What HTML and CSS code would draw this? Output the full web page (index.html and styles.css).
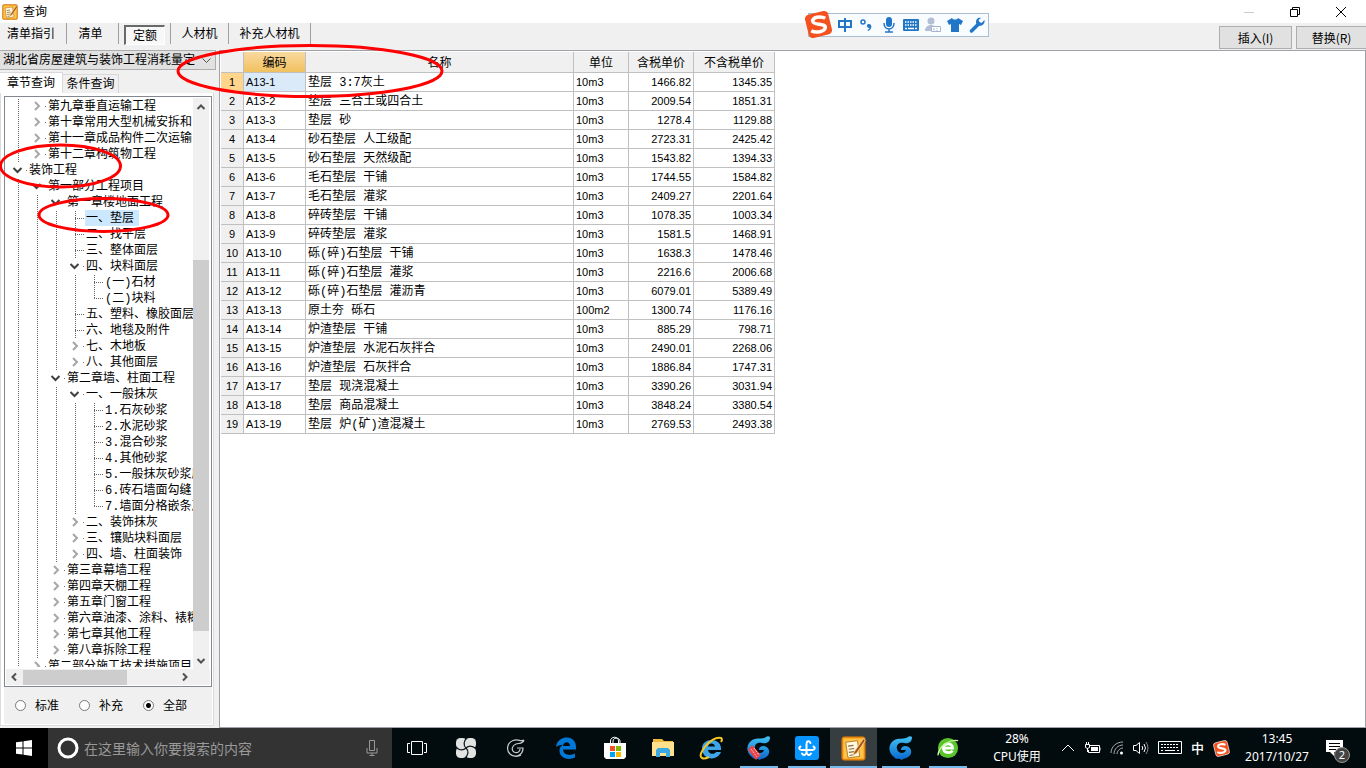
FILE: index.html
```html
<!DOCTYPE html>
<html lang="zh-CN">
<head>
<meta charset="utf-8">
<title>查询</title>
<link rel="stylesheet" href="styles.css">
</head>
<body>
<div class="desktop">
  <header class="titlebar">
    <svg class="app-icon" viewBox="0 0 32 32"><use href="#note-icon"/></svg>
    <h1 class="title">查询</h1>
    <div class="window-buttons">
      <button class="win-btn" aria-label="最小化"><svg viewBox="0 0 12 12"><path d="M1 6.500h10" stroke="#ccc"/></svg></button>
      <button class="win-btn" aria-label="还原"><svg viewBox="0 0 12 12"><path d="M1.500 3.500h7v7h-7zM3.500 3.500v-2h7v7h-2" stroke="#000"/></svg></button>
      <button class="win-btn" aria-label="关闭"><svg viewBox="0 0 12 12"><path d="M1 1l10 10M11 1L1 11" stroke="#000"/></svg></button>
    </div>
  </header>

  <nav class="toolbar">
    <button class="tool tool-wide">清单指引</button>
    <button class="tool">清单</button>
    <button class="tool"><span class="pressed">定额</span></button>
    <button class="tool tool-mid">人材机</button>
    <button class="tool tool-xwide">补充人材机</button>
    <div class="actions">
      <button class="action">插入(I)</button>
      <button class="action">替换(R)</button>
    </div>
  </nav>

  <main class="content">
    <aside class="sidebar">
      <div class="combo">
        <select class="combo-select" aria-label="定额库"><option>湖北省房屋建筑与装饰工程消耗量定</option></select>
        <svg class="combo-arrow" viewBox="0 0 9 6"><path d="M.5 .5l4 4 4-4" stroke="#555"/></svg>
      </div>
      <div class="tabs" role="tablist">
        <button class="tab tab-active" role="tab" aria-selected="true">章节查询</button>
        <button class="tab" role="tab" aria-selected="false">条件查询</button>
      </div>
      <section class="tab-panel">
        <div class="tree-box">
          <div class="tree-main">
            <ul class="tree" role="tree">
              <li class="row l1 closed"><span class="label">第九章垂直运输工程</span></li>
              <li class="row l1 closed"><span class="label">第十章常用大型机械安拆和</span></li>
              <li class="row l1 closed"><span class="label">第十一章成品构件二次运输</span></li>
              <li class="row l1 closed"><span class="label">第十二章构筑物工程</span></li>
              <li class="row l0 open"><span class="label">装饰工程</span></li>
              <li class="row l1 open"><span class="label">第一部分工程项目</span></li>
              <li class="row l2 open"><span class="label">第一章楼地面工程</span></li>
              <li class="row l3 leaf"><span class="label selected">一、垫层</span></li>
              <li class="row l3 leaf"><span class="label">二、找平层</span></li>
              <li class="row l3 leaf"><span class="label">三、整体面层</span></li>
              <li class="row l3 open"><span class="label">四、块料面层</span></li>
              <li class="row l4 leaf"><span class="label">(一)石材</span></li>
              <li class="row l4 leaf last"><span class="label">(二)块料</span></li>
              <li class="row l3 leaf"><span class="label">五、塑料、橡胶面层</span></li>
              <li class="row l3 leaf"><span class="label">六、地毯及附件</span></li>
              <li class="row l3 closed"><span class="label">七、木地板</span></li>
              <li class="row l3 closed"><span class="label">八、其他面层</span></li>
              <li class="row l2 open"><span class="label">第二章墙、柱面工程</span></li>
              <li class="row l3 open"><span class="label">一、一般抹灰</span></li>
              <li class="row l4 leaf"><span class="label">1.石灰砂浆</span></li>
              <li class="row l4 leaf"><span class="label">2.水泥砂浆</span></li>
              <li class="row l4 leaf"><span class="label">3.混合砂浆</span></li>
              <li class="row l4 leaf"><span class="label">4.其他砂浆</span></li>
              <li class="row l4 leaf"><span class="label">5.一般抹灰砂浆厚</span></li>
              <li class="row l4 leaf"><span class="label">6.砖石墙面勾缝</span></li>
              <li class="row l4 leaf last"><span class="label">7.墙面分格嵌条及</span></li>
              <li class="row l3 closed"><span class="label">二、装饰抹灰</span></li>
              <li class="row l3 closed"><span class="label">三、镶贴块料面层</span></li>
              <li class="row l3 closed"><span class="label">四、墙、柱面装饰</span></li>
              <li class="row l2 closed"><span class="label">第三章幕墙工程</span></li>
              <li class="row l2 closed"><span class="label">第四章天棚工程</span></li>
              <li class="row l2 closed"><span class="label">第五章门窗工程</span></li>
              <li class="row l2 closed"><span class="label">第六章油漆、涂料、裱糊</span></li>
              <li class="row l2 closed"><span class="label">第七章其他工程</span></li>
              <li class="row l2 closed"><span class="label">第八章拆除工程</span></li>
              <li class="row l1 closed"><span class="label">第二部分施工技术措施项目</span></li>
            </ul>
            <div class="vscroll">
              <svg class="arrow" viewBox="0 0 10 10"><path d="M1.500 7L5 3.500 8.500 7"/></svg>
              <div class="vtrack"><div class="vthumb"></div></div>
              <svg class="arrow" viewBox="0 0 10 10"><path d="M1.500 3L5 6.500 8.500 3"/></svg>
            </div>
          </div>
          <div class="hscroll">
            <svg class="arrow" viewBox="0 0 10 10"><path d="M7 1.500L3.500 5 7 8.500"/></svg>
            <div class="htrack"><div class="hthumb"></div></div>
            <svg class="arrow" viewBox="0 0 10 10"><path d="M3 1.500L6.500 5 3 8.500"/></svg>
          </div>
        </div>
        <div class="filters">
          <label class="filter"><input type="radio" name="scope"><span class="filter-text">标准</span></label>
          <label class="filter"><input type="radio" name="scope"><span class="filter-text">补充</span></label>
          <label class="filter"><input type="radio" name="scope" checked><span class="filter-text">全部</span></label>
        </div>
      </section>
    </aside>

    <section class="grid-panel">
      <table class="grid">
        <colgroup><col class="c-no"><col class="c-code"><col class="c-name"><col class="c-unit"><col class="c-price"><col class="c-net"></colgroup>
        <thead><tr><th></th><th class="hot">编码</th><th>名称</th><th>单位</th><th>含税单价</th><th>不含税单价</th></tr></thead>
        <tbody>
          <tr class="current"><th>1</th><td>A13-1</td><td>垫层 3:7灰土</td><td>10m3</td><td>1466.82</td><td>1345.35</td></tr>
          <tr><th>2</th><td>A13-2</td><td>垫层 三合土或四合土</td><td>10m3</td><td>2009.54</td><td>1851.31</td></tr>
          <tr><th>3</th><td>A13-3</td><td>垫层 砂</td><td>10m3</td><td>1278.4</td><td>1129.88</td></tr>
          <tr><th>4</th><td>A13-4</td><td>砂石垫层 人工级配</td><td>10m3</td><td>2723.31</td><td>2425.42</td></tr>
          <tr><th>5</th><td>A13-5</td><td>砂石垫层 天然级配</td><td>10m3</td><td>1543.82</td><td>1394.33</td></tr>
          <tr><th>6</th><td>A13-6</td><td>毛石垫层 干铺</td><td>10m3</td><td>1744.55</td><td>1584.82</td></tr>
          <tr><th>7</th><td>A13-7</td><td>毛石垫层 灌浆</td><td>10m3</td><td>2409.27</td><td>2201.64</td></tr>
          <tr><th>8</th><td>A13-8</td><td>碎砖垫层 干铺</td><td>10m3</td><td>1078.35</td><td>1003.34</td></tr>
          <tr><th>9</th><td>A13-9</td><td>碎砖垫层 灌浆</td><td>10m3</td><td>1581.5</td><td>1468.91</td></tr>
          <tr><th>10</th><td>A13-10</td><td>砾(碎)石垫层 干铺</td><td>10m3</td><td>1638.3</td><td>1478.46</td></tr>
          <tr><th>11</th><td>A13-11</td><td>砾(碎)石垫层 灌浆</td><td>10m3</td><td>2216.6</td><td>2006.68</td></tr>
          <tr><th>12</th><td>A13-12</td><td>砾(碎)石垫层 灌沥青</td><td>10m3</td><td>6079.01</td><td>5389.49</td></tr>
          <tr><th>13</th><td>A13-13</td><td>原土夯 砾石</td><td>100m2</td><td>1300.74</td><td>1176.16</td></tr>
          <tr><th>14</th><td>A13-14</td><td>炉渣垫层 干铺</td><td>10m3</td><td>885.29</td><td>798.71</td></tr>
          <tr><th>15</th><td>A13-15</td><td>炉渣垫层 水泥石灰拌合</td><td>10m3</td><td>2490.01</td><td>2268.06</td></tr>
          <tr><th>16</th><td>A13-16</td><td>炉渣垫层 石灰拌合</td><td>10m3</td><td>1886.84</td><td>1747.31</td></tr>
          <tr><th>17</th><td>A13-17</td><td>垫层 现浇混凝土</td><td>10m3</td><td>3390.26</td><td>3031.94</td></tr>
          <tr><th>18</th><td>A13-18</td><td>垫层 商品混凝土</td><td>10m3</td><td>3848.24</td><td>3380.54</td></tr>
          <tr><th>19</th><td>A13-19</td><td>垫层 炉(矿)渣混凝土</td><td>10m3</td><td>2769.53</td><td>2493.38</td></tr>
        </tbody>
      </table>
    </section>
  </main>

  <footer class="taskbar">
    <button class="start" aria-label="开始"><svg viewBox="0 0 16 16" width="16" height="16"><path fill="#fff" d="M0 2.300L6.500 1.400v6.100H0zM7.500 1.200L16 0v7.500H7.500zM0 8.500h6.500v6.100L0 13.700zM7.500 8.500H16V16l-8.500-1.200z"/></svg></button>
    <label class="search">
      <svg viewBox="0 0 22 22" width="22" height="22"><circle cx="11" cy="11" r="9" fill="none" stroke="#fff" stroke-width="3"/></svg>
      <input class="search-input" type="text" placeholder="在这里输入你要搜索的内容">
      <svg viewBox="0 0 12 18" width="12" height="18" fill="none" stroke="#999"><path d="M3.500 1.500h5v10h-5zM1 9v5h10V9M6 14v3M3.500 16.500h5"/></svg>
    </label>
    <div class="apps">
      <button class="app" aria-label="任务视图"><svg viewBox="0 0 20 16" width="20" height="16" fill="none" stroke="#fff"><path d="M4.500 1.500h11v13h-11zM3 3.500H.5v9H3M17 3.500h2.500v9H17"/></svg></button>
      <button class="app app-wide" aria-label="四叶草"><svg viewBox="0 0 22 22" width="22" height="22"><g fill="#e2e4e4"><rect x="1" y="1" width="11" height="11" rx="4.500"/><rect x="10" y="1" width="11" height="11" rx="4.500"/><rect x="1" y="10" width="11" height="11" rx="4.500"/><rect x="10" y="10" width="11" height="11" rx="4.500"/><circle cx="11" cy="11" r="3"/></g><path d="M11 11C8 8 9 4 12 .5M11 11c3-3 7-2 10.500 1M11 11c3 3 2 7-1 10.500M11 11c-3 3-7 2-10.500-1" fill="none" stroke="#111b1f" stroke-width="1.200"/></svg></button>
      <button class="app app-wide" aria-label="浏览器"><svg viewBox="0 0 20 20" width="20" height="20" fill="none" stroke="#c8cdd0" stroke-width="1.200"><path d="M18 2C15 4 12 .5 7 2.500 1 5 0 12 4 16c5 4.500 13 1.500 13-6h-6M18 2c-1 4-5 3-8 4-4 1.500-5 6-2 8 3 1.500 6 0 6-3M3 15c3 4 9 4 12 2"/></svg></button>
      <button class="app app-wide" aria-label="Edge"><svg viewBox="0 0 22 22" width="22" height="22"><path fill="#0078d7" d="M1 10C2 3 7 .5 12 .5c6 0 9 4.500 9 9.500v2.500H8c.5 6 8 6.500 12 4v4c-4 2-10 2-13-1-4-4-3-10 1.500-12C4.500 8 2.500 9 1 10zm7-1h7c0-5-6.500-5-7 0z"/></svg></button>
      <button class="app" aria-label="应用商店"><svg viewBox="0 0 24 24" width="24" height="24"><path d="M7.500 8V5c0-5 8-5 8 0v3M10 7V5c0-4 7-3.500 7 0v2" fill="none" stroke="#fff"/><path fill="#fff" d="M1 7h22v14l-2 2H3l-2-2z"/><path fill="#f25022" d="M7 10h5v5H7z"/><path fill="#7fba00" d="M13 10h5v5h-5z"/><path fill="#00a4ef" d="M7 16h5v5H7z"/><path fill="#ffb900" d="M13 16h5v5h-5z"/></svg></button>
      <button class="app" aria-label="文件资源管理器"><svg viewBox="0 0 22 20" width="22" height="20"><path fill="#efb93a" d="M1 1h9l2 2h9v5H1z"/><path fill="#ffe08c" d="M0 4h22v14H0z"/><path fill="#38a9e4" d="M4 19v-7l2-2h10l2 2v7h-4v-4H8v4z"/></svg></button>
      <button class="app" aria-label="Internet Explorer"><svg viewBox="0 0 24 24" width="24" height="24"><path fill="#3ea6e8" d="M3 12.500C3 1 22 1 22 12.500V14H9c1 5 7 4.500 8 2h5c-4 10-19 8-19-3.500zM9 10.500h7c-.5-4-6.500-4-7 0z"/><path d="M3 22C-3 19 12 0 22 2c2 1 0 4 0 4M3 22c2 1 5 0 7-1" fill="none" stroke="#f5c722" stroke-width="2"/></svg></button>
      <button class="app running" aria-label="广联达"><svg viewBox="0 0 24 24" width="24" height="24"><use href="#swirl"/><path d="M5 9l9 10-5 5L1 14z" fill="#e6454b"/><path d="M4 13l6 8M7 12l5 7" stroke="#ffb8b5" stroke-dasharray="2 1"/></svg></button>
      <button class="app app-slim running" aria-label="同步"><svg viewBox="0 0 24 24" width="24" height="24"><rect width="24" height="24" rx="3" fill="#0796ff"/><path d="M15.500 7C14 4 11.500 5 11.500 8v8c0 3-3 4-4.500 1.500M5.500 10.500c-2 1-1.500 3.500 1 3.500h11c2.500 0 3-2.500 1-3.500M11.500 16c0 3 3 4 4.500 1.500" fill="none" stroke="#fff" stroke-width="2" stroke-linecap="round"/></svg></button>
      <button class="app app-slim running active" aria-label="计价软件"><svg viewBox="0 0 32 32" width="25" height="25"><use href="#note-icon"/></svg></button>
      <button class="app app-slim running" aria-label="云服务"><svg viewBox="0 0 24 24" width="24" height="24"><use href="#swirl"/></svg></button>
      <button class="app app-slim running" aria-label="安全浏览器"><svg viewBox="0 0 24 24" width="22" height="22"><circle cx="12" cy="12" r="11" fill="#5ac52b"/><path d="M8 12h9c0-6-10-6-10 0s8 6 10 3" fill="none" stroke="#fff" stroke-width="3"/><path d="M1 20C2 10 14 2 23 4" fill="none" stroke="#c8f4a5" stroke-width="1.500"/></svg></button>
    </div>
    <div class="tray">
      <div class="readout cpu"><span>28%</span><span>CPU使用</span></div>
      <svg viewBox="0 0 14 8" width="14" height="8"><path d="M1 7l6-6 6 6"/></svg>
      <svg viewBox="0 0 17 12" width="17" height="12"><path d="M5.500 3.500h10v7h-11V8M16 5.500v3M1.500 2.500h4v3l-2 1-2-1zM2.500 0v2M4.500 0v2M3.500 6v4"/><path d="M7 5h7v4H7z" fill="#fff" stroke="none"/></svg>
      <svg viewBox="0 0 14 14" width="14" height="14"><path d="M1 12C1 6 6 1 13 1M4 13c0-5 4-9 9-9M7 13c0-3 3-6 6-6" stroke="#aaa"/><circle cx="11.500" cy="12" r="1.500" fill="#fff" stroke="none"/></svg>
      <svg viewBox="0 0 16 14" width="16" height="14"><path d="M.5 4.500H3L6.500 1.500v11L3 9.500H.5zM9 5q1.500 2 0 4M11 3q3 4 0 8"/><path d="M13 1q4 6 0 12" stroke="#888"/></svg>
      <svg viewBox="0 0 24 14" width="24" height="14"><path d="M.5 .5h23v12H.5z"/><path d="M3 3.500h18M3 6.500h18" stroke-dasharray="2 1"/><path d="M3 9.500h2M7 9.500h10M19 9.500h2"/></svg>
      <span class="ime">中</span>
      <svg viewBox="0 0 28 28" width="17" height="17"><use href="#sogou"/></svg>
      <div class="readout clock"><span>13:45</span><span>2017/10/27</span></div>
      <button class="notify" aria-label="2 条新通知"><svg viewBox="0 0 17 16" width="17" height="16"><path d="M0 0h17v12H8v4l-4-4H0z" fill="#fff" stroke="none"/><path d="M3 3.500h11M3 6.500h11M3 9.500h7" stroke="#000"/></svg><span class="count">2</span></button>
    </div>
  </footer>

  <div class="ime-bar">
    <svg class="ime-logo" viewBox="0 0 28 28"><use href="#sogou"/></svg>
    <div class="ime-tools">
      <svg viewBox="0 0 16 16"><path d="M2 4h12v6H2zM8 1v14" fill="none" stroke="#2176c7" stroke-width="2"/></svg>
      <svg viewBox="0 0 16 16"><circle cx="4" cy="5" r="2" fill="none" stroke="#2176c7" stroke-width="1.500"/><path d="M9 7c4-1 5 5 0 7l-.5-1c2-1 2-2 2-2-3 0-3-3-1.500-4z" fill="#2176c7"/></svg>
      <svg viewBox="0 0 16 16"><rect x="5" y="0" width="6" height="10" rx="3" fill="#2176c7"/><path d="M3 6c0 8 10 8 10 0M8 12v3M4 15h8" fill="none" stroke="#2176c7" stroke-width="1.500"/></svg>
      <svg viewBox="0 0 16 16"><rect y="2" width="16" height="12" rx="1" fill="#2176c7"/><path d="M2 5h12M2 8h12" stroke="#fff" stroke-width="1.500" stroke-dasharray="1.500 1"/><path d="M2 11.500h2M5 11.500h6M12 11.500h2" stroke="#fff" stroke-width="1.500"/></svg>
      <svg viewBox="0 0 16 16"><circle cx="6" cy="4" r="3.500" fill="#b3bfd4"/><path d="M0 14c0-8 12-8 12 0z" fill="#b3bfd4"/><path d="M6.500 9.500h9v5h-9z" fill="#fff" stroke="#a5b3cc"/><path d="M9 11v2.500M12 11v1M12 13v1" stroke="#a5b3cc"/></svg>
      <svg viewBox="0 0 16 16"><path d="M5 1c1 2 5 2 6 0l5 3-2 4-2-1v8H4V7L2 8 0 4z" fill="#2176c7"/></svg>
      <svg viewBox="0 0 16 16"><path d="M2.500 14L9 7.500" stroke="#2176c7" stroke-width="3.500" stroke-linecap="round"/><path d="M12 1C8 0 6 4 7.500 7c3 4 9 1 8-4l-3 3-2-1-1-2z" fill="#2176c7"/></svg>
    </div>
  </div>

  <svg class="marks" width="460" height="240" viewBox="0 0 460 240" fill="none" stroke="#f00" stroke-width="3">
    <ellipse cx="310" cy="71" rx="132" ry="25.500"/>
    <ellipse cx="60.500" cy="166" rx="60" ry="21"/>
    <ellipse cx="103.500" cy="215" rx="64.500" ry="16.500"/>
  </svg>
</div>

<svg class="defs" aria-hidden="true">
  <defs>
    <linearGradient id="blue-fade" x1="0" y1="0" x2="0" y2="1"><stop offset="0" stop-color="#42c3f3"/><stop offset="1" stop-color="#0868cf"/></linearGradient>
    <symbol id="note-icon" viewBox="0 0 32 32">
      <rect x="1" y="1" width="30" height="30" rx="3" fill="#f28c0c" stroke="#b86c10"/>
      <rect x="3" y="3" width="26" height="26" fill="#ffc345"/>
      <path d="M6 8l15-2 3 20-15 2z" fill="#fff8dc" stroke="#a5651a"/>
      <path d="M9 13l7-1M10 17l7-1M10 21l7-1M11 25l5-1" stroke="#8a6a45" stroke-width="1.500"/>
      <path d="M29 3L17 20l-2 5 5-3L31 6z" fill="#a9521a" stroke="#fbe0a0"/>
    </symbol>
    <symbol id="swirl" viewBox="0 0 24 24">
      <path fill="url(#blue-fade)" d="M23 1c0 5-3 7-8 6-5-1-8 2-7 6 1 5 8 5 9 1h-5c0-3 2-4 5-4 6 1 7 8 2 11-2 2-5 1-6 3-3-2-6 0-8-3C-1 17-1 9 4 5c5-4 12-1 15-4 1-1 3-1 4 0z"/>
    </symbol>
    <symbol id="sogou" viewBox="0 0 28 28">
      <rect x="2.500" y="2.500" width="23" height="23" rx="4" fill="#f4511e" transform="rotate(-14 14 14)"/>
      <path d="M20.500 8C16 5.500 7.500 7 8.500 11c.5 4 12.500 1.500 12 6-.5 4-9 5.500-13.500 3" fill="none" stroke="#fff" stroke-width="3.500"/>
    </symbol>
  </defs>
</svg>
</body>
</html>
```
FILE: styles.css
```css
* { box-sizing: border-box; }

body {
  margin: 0;
  background: #f0f0f0;
  color: #000;
  font: 12px/16px "Liberation Mono", "Noto Sans CJK SC", monospace;
}

button, input, select { font: inherit; color: inherit; }
button { padding: 0; border: 0; background: none; }
svg { display: block; flex: none; }
.defs { position: absolute; width: 0; height: 0; }

.desktop {
  position: relative;
  display: flex;
  flex-direction: column;
  height: 100vh;
  overflow: hidden;
}

/* title bar */
.titlebar { display: flex; align-items: center; flex: none; height: 23px; padding-left: 2px; background: #fff; }
.app-icon { width: 16px; height: 16px; }
.title { margin: 0 0 0 5px; padding-top: 2px; font-size: 12px; font-weight: 400; }
.window-buttons { display: flex; margin-left: auto; padding-right: 2px; }
.win-btn { display: flex; align-items: center; justify-content: center; width: 46px; height: 20px; }
.win-btn svg { width: 12px; height: 12px; fill: none; }

/* toolbar */
.toolbar { display: flex; flex: none; height: 27px; }
.tool { width: 52px; height: 21px; border-right: 1px solid #a0a0a0; padding: 2px 4px 0 0; }
.tool-wide { width: 67px; }
.tool-mid { width: 58px; padding-right: 0; }
.tool-xwide { width: 82px; padding-right: 0; }
.pressed {
  display: block;
  width: 41px;
  height: 20px;
  margin-left: 5px;
  padding-top: 2px;
  border: 1px solid #fff;
  border-top: 2px solid #696969;
  border-left: 2px solid #696969;
  background: #f8f8f8;
}
.actions { display: flex; gap: 4px; margin: 3px 0 0 auto; }
.action { width: 73px; height: 23px; border: 1px solid #adadad; background: #e1e1e1; font-family: "Noto Sans CJK SC", sans-serif; }
.action:last-child { width: 70px; border-right: 0; }

/* sidebar */
.content { display: flex; flex: 1; min-height: 0; }
.sidebar { display: flex; flex-direction: column; flex: none; width: 219px; }
.combo { position: relative; width: 216px; height: 20px; }
.combo-select {
  width: 100%;
  height: 20px;
  padding: 2px 20px 0 3px;
  border: 1px solid #adadad;
  border-left: 0;
  background: #e1e1e1;
  appearance: none;
}
.combo-arrow { position: absolute; right: 5px; top: 8px; width: 9px; height: 6px; fill: none; }
.tabs { display: flex; align-items: flex-end; height: 23px; }
.tab { width: 56px; height: 19px; padding-top: 2px; border: 1px solid #d9d9d9; border-left: 0; border-bottom: 0; }
.tab-active { width: 63px; height: 21px; background: #fff; }

.tab-panel {
  display: flex;
  flex-direction: column;
  flex: 1;
  min-height: 0;
  width: 214px;
  margin-bottom: 2px;
  padding: 3px 1px 1px 3px;
  border: 1px solid #dcdcdc;
  border-top: 0;
  background: #fff;
}
.tree-box {
  display: flex;
  flex-direction: column;
  flex: 1;
  min-height: 0;
  padding: 1px;
  border: 1px solid #828790;
  background: #fff;
}
.tree-main { display: flex; flex: 1; min-height: 0; }
.tree { flex: 1; min-width: 0; margin: 0 0 2px; padding: 0; overflow: hidden; list-style: none; }

.row { display: flex; height: 16px; padding-left: 6px; white-space: nowrap; --depth: 0; }
.l1 { --depth: 1; }
.l2 { --depth: 2; }
.l3 { --depth: 3; }
.l4 { --depth: 4; }

/* dotted guides, one per ancestor level */
.row::before {
  content: "";
  flex: none;
  width: calc(var(--depth) * 19px);
  background:
    repeating-linear-gradient(#fff 0 1px, transparent 1px 2px),
    linear-gradient(90deg, #666 1px, transparent 1px) 6px 0 / 19px 100%;
}
.label { order: 2; padding: 1px 1px 0; }
.selected { padding-right: 5px; background: #cce8ff; }
.row::after { content: ""; flex: none; order: 1; width: 16px; background-repeat: no-repeat; }
.open::after {
  background-image: url("data:image/svg+xml,%3Csvg xmlns='http://www.w3.org/2000/svg' width='16' height='16' fill='none'%3E%3Cpath d='M1.500 6l4 4 4-4' stroke='%23404040' stroke-width='2'/%3E%3Cpath d='M14 8.500h1' stroke='%23777'/%3E%3C/svg%3E");
}
.closed::after {
  background-image: url("data:image/svg+xml,%3Csvg xmlns='http://www.w3.org/2000/svg' width='16' height='16' fill='none'%3E%3Cpath d='M4 4l4 4-4 4' stroke='%23a6a6a6' stroke-width='2'/%3E%3Cpath d='M14 8.500h1' stroke='%23777'/%3E%3C/svg%3E");
}
.leaf::after {
  background-image: url("data:image/svg+xml,%3Csvg xmlns='http://www.w3.org/2000/svg' width='16' height='16' fill='none' stroke='%23666' stroke-dasharray='1'%3E%3Cpath d='M6.500 1v15M6 8.500h10'/%3E%3C/svg%3E");
}
.last::after {
  background-image: url("data:image/svg+xml,%3Csvg xmlns='http://www.w3.org/2000/svg' width='16' height='16' fill='none' stroke='%23666' stroke-dasharray='1'%3E%3Cpath d='M6.500 1v8M6 8.500h10'/%3E%3C/svg%3E");
}

.vscroll { display: flex; flex-direction: column; align-items: center; width: 16px; margin-right: 1px; padding: 4px 0 3px; background: #f0f0f0; }
.arrow { width: 10px; height: 10px; fill: none; stroke: #505050; stroke-width: 2; }
.vtrack { display: flex; flex-direction: column; justify-content: flex-end; flex: 1; align-self: stretch; padding: 4px 0 25px; }
.vthumb { height: 72%; background: #cdcdcd; }
.hscroll { display: flex; align-items: center; flex: none; height: 16px; padding: 0 20px 0 3px; background: #f0f0f0; }
.htrack { flex: 1; padding: 0 4px; }
.hthumb { width: 68%; height: 15px; background: #cdcdcd; }

.filters { display: flex; flex: none; align-items: center; height: 37px; padding-left: 11px; background: #f0f0f0; }
.filter { display: flex; align-items: center; gap: 9px; width: 64px; }
.filter-text { padding-top: 2px; }
.filter input {
  width: 11px;
  height: 11px;
  margin: 0;
  border: 1px solid #777;
  border-radius: 50%;
  background: #fff;
  appearance: none;
}
.filter input:checked { background: radial-gradient(#000 0 2px, #fff 3px); }

/* data grid */
.grid-panel { flex: 1; min-width: 0; border: 1px solid #a0a0a8; padding: 1px; background: #fff; }
.grid { width: 554px; border-collapse: separate; border-spacing: 0; table-layout: fixed; }
.c-no { width: 23px; }
.c-code { width: 62px; }
.c-name { width: 268px; }
.c-unit { width: 55px; }
.c-price { width: 65px; }
.c-net { width: 81px; }
.grid th, .grid td { height: 19px; padding: 0 2px; border-right: 1px solid #c0c0c0; border-bottom: 1px solid #c0c0c0; line-height: 16px; white-space: nowrap; overflow: hidden; }
.grid td:nth-child(3) { padding: 2px 2px 0; }
.grid th { padding: 0; background: #f0f0f0; font-weight: 400; text-align: center; }
.grid thead th { height: 21px; padding-top: 3px; }
.grid .hot { background: linear-gradient(#f9d99f, #f1c15f); }
.grid tbody th, .grid td:not(:nth-child(3)) { font-family: "Liberation Sans", "Noto Sans CJK SC", sans-serif; font-size: 11px; }
.grid td:nth-child(n + 5) { text-align: right; }
.grid .current th { background: #ffd58d; }
.current td:nth-child(2) { background: #dbeaf9; }

/* taskbar */
.taskbar { display: flex; flex: none; height: 40px; background: #020b0e; color: #fff; font-family: "Noto Sans", "Noto Sans CJK SC", sans-serif; }
.start { display: flex; align-items: center; justify-content: center; width: 48px; background: #000; }
.search { display: flex; align-items: center; width: 344px; padding: 0 14px 0 9px; background: #333; }
.search-input { flex: 1; min-width: 0; margin: 0 5px; padding: 0; border: 0; background: none; font: 14px/20px "Noto Sans CJK SC", sans-serif; }
.search-input::placeholder { color: #999; opacity: 1; }
.apps { display: flex; padding-left: 1px; }
.app { display: flex; align-items: center; justify-content: center; width: 48px; padding-top: 2px; border-bottom: 2px solid transparent; }
.app-wide { width: 50px; }
.app-slim { width: 47px; }
.running { background: linear-gradient(#76b9ed, #76b9ed) center bottom / 38px 2px no-repeat border-box; }
.active { background: linear-gradient(#76b9ed, #76b9ed) center bottom / 100% 2px no-repeat border-box, #373e41; }
.tray { display: flex; align-items: center; gap: 9px; margin-left: auto; padding-right: 23px; fill: none; stroke: #fff; }
.tray span { stroke: none; }
.readout { display: flex; flex-direction: column; align-items: center; font-size: 12px; line-height: 18px; }
.cpu { width: 54px; margin-right: 8px; }
.clock { width: 68px; margin-left: 4px; }
.ime { font-size: 13px; font-weight: 500; }
.notify { position: relative; display: flex; align-items: center; width: 17px; height: 40px; margin-left: 6px; stroke: none; color: #fff; }
.count {
  position: absolute;
  left: 8px;
  top: 19px;
  width: 16px;
  height: 16px;
  border: 1px solid #999;
  border-radius: 50%;
  background: #444;
  font-size: 11px;
  line-height: 14px;
  text-align: center;
}

/* floating input-method bar */
.ime-bar {
  position: absolute;
  left: 808px;
  top: 13px;
  width: 181px;
  height: 24px;
  padding-left: 28px;
  border: 1px solid #a9bdd3;
  background: #f9fcff;
}
.ime-logo { position: absolute; left: -5px; top: -4px; width: 29px; height: 29px; }
.ime-tools { display: flex; align-items: center; gap: 6px; height: 100%; }
.ime-tools svg { width: 16px; height: 16px; }

/* hand-drawn highlights over the window */
.marks { position: absolute; left: 0; top: 0; pointer-events: none; }
```
